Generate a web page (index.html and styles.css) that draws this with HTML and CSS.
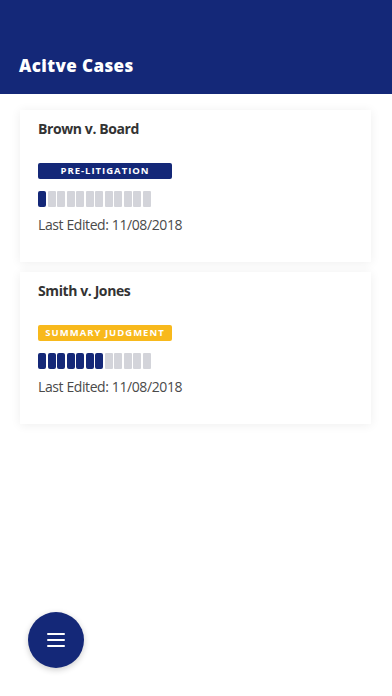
FILE: index.html
```html
<!DOCTYPE html>
<html>
<head>
<meta charset="utf-8">
<link rel="stylesheet" href="styles.css">
</head>
<body>
<header class="topbar">
  <h1 class="topbar-title">Acitve Cases</h1>
</header>
<main class="case-list">
  <section class="case-card">
    <h2 class="case-title">Brown v. Board</h2>
    <div class="badge badge-blue">PRE-LITIGATION</div>
    <div class="progress">
      <span class="seg on"></span><span class="seg"></span><span class="seg"></span><span class="seg"></span><span class="seg"></span><span class="seg"></span><span class="seg"></span><span class="seg"></span><span class="seg"></span><span class="seg"></span><span class="seg"></span><span class="seg"></span>
    </div>
    <p class="edited">Last Edited: 11/08/2018</p>
  </section>
  <section class="case-card">
    <h2 class="case-title">Smith v. Jones</h2>
    <div class="badge badge-yellow">SUMMARY JUDGMENT</div>
    <div class="progress">
      <span class="seg on"></span><span class="seg on"></span><span class="seg on"></span><span class="seg on"></span><span class="seg on"></span><span class="seg on"></span><span class="seg on"></span><span class="seg"></span><span class="seg"></span><span class="seg"></span><span class="seg"></span><span class="seg"></span>
    </div>
    <p class="edited">Last Edited: 11/08/2018</p>
  </section>
</main>
<button class="fab" aria-label="Menu">
  <svg width="18" height="14" viewBox="0 0 18 14"><rect x="0" y="0" width="18" height="2" rx="1" fill="#fff"/><rect x="0" y="6" width="18" height="2" rx="1" fill="#fff"/><rect x="0" y="12" width="18" height="2" rx="1" fill="#fff"/></svg>
</button>
</body>
</html>
```
FILE: styles.css
```css
html, body {
  margin: 0;
  padding: 0;
  background: #ffffff;
  font-family: "Open Sans", "Liberation Sans", sans-serif;
}
body {
  width: 392px;
  height: 696px;
  overflow: hidden;
  position: relative;
}
.topbar {
  height: 94px;
  background: #142878;
  display: flex;
  align-items: flex-end;
  padding: 0 0 17px 19px;
  box-sizing: border-box;
}
.topbar-title {
  margin: 0;
  color: #ffffff;
  font-family: "Open Sans", "Liberation Sans", sans-serif;
  font-weight: 800;
  font-size: 17px;
  line-height: 22px;
  letter-spacing: 0.4px;
}
.case-list {
  display: flex;
  flex-direction: column;
  gap: 10px;
  padding: 16px 21px 0 20px;
}
.case-card {
  height: 152px;
  box-sizing: border-box;
  background: #ffffff;
  padding: 9px 18px 0 18px;
  box-shadow: 0 1px 10px rgba(0, 0, 0, 0.07);
}
.case-title {
  margin: 0;
  font-size: 14px;
  line-height: 20px;
  font-weight: 700;
  letter-spacing: -0.4px;
  color: #333333;
}
.badge {
  margin-top: 24px;
  width: 134px;
  height: 16px;
  border-radius: 2px;
  color: #ffffff;
  font-size: 9.5px;
  font-weight: 700;
  letter-spacing: 1px;
  line-height: 16px;
  text-align: center;
}
.badge-blue { background: #142878; }
.badge-yellow { background: #f8b91c; }
.progress {
  margin-top: 12px;
  display: flex;
  gap: 1.5px;
  height: 16px;
}
.seg {
  width: 8px;
  height: 16px;
  background: #d3d4da;
  border-radius: 1px;
}
.seg.on { background: #142878; border-radius: 2px; }
.edited {
  margin: 8px 0 0 0;
  font-size: 14px;
  line-height: 20px;
  letter-spacing: -0.4px;
  color: #4a4a4a;
}
.fab {
  position: absolute;
  left: 28px;
  top: 612px;
  width: 56px;
  height: 56px;
  border-radius: 50%;
  border: none;
  padding: 0;
  background: #142878;
  box-shadow: 0 2px 6px rgba(0, 0, 0, 0.2);
  display: flex;
  align-items: center;
  justify-content: center;
}
```
